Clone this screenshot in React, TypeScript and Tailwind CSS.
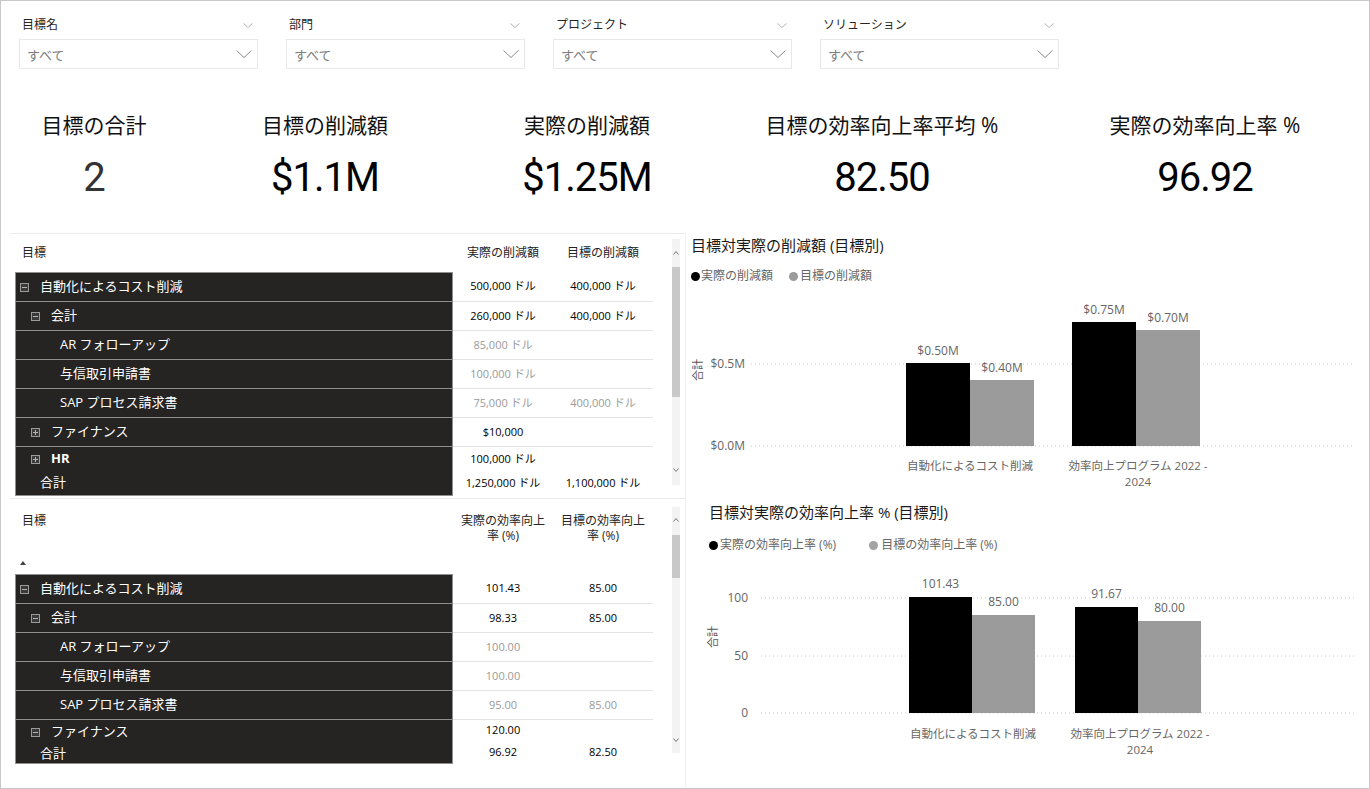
import React from "react";

type Row = {
  label: string;
  indent: string;
  icon?: "minus" | "plus";
  a?: string;
  t?: string;
  muted?: boolean;
  first?: boolean;
};

const savingsRows: Row[] = [
  { label: "自動化によるコスト削減", indent: "pl-[4px]", icon: "minus", a: "500,000 ドル", t: "400,000 ドル", first: true },
  { label: "会計", indent: "pl-[15px]", icon: "minus", a: "260,000 ドル", t: "400,000 ドル" },
  { label: "AR フォローアップ", indent: "pl-[44px]", a: "85,000 ドル", muted: true },
  { label: "与信取引申請書", indent: "pl-[44px]", a: "100,000 ドル", muted: true },
  { label: "SAP プロセス請求書", indent: "pl-[44px]", a: "75,000 ドル", t: "400,000 ドル", muted: true },
  { label: "ファイナンス", indent: "pl-[15px]", icon: "plus", a: "$10,000" },
];

const rateRows: Row[] = [
  { label: "自動化によるコスト削減", indent: "pl-[4px]", icon: "minus", a: "101.43", t: "85.00", first: true },
  { label: "会計", indent: "pl-[15px]", icon: "minus", a: "98.33", t: "85.00" },
  { label: "AR フォローアップ", indent: "pl-[44px]", a: "100.00", muted: true },
  { label: "与信取引申請書", indent: "pl-[44px]", a: "100.00", muted: true },
  { label: "SAP プロセス請求書", indent: "pl-[44px]", a: "95.00", t: "85.00", muted: true },
];

const kpis = [
  { title: "目標の合計", value: "2", w: "w-[170px]", color: "text-[#333333]" },
  { title: "目標の削減額", value: "$1.1M", w: "w-[292px]", color: "text-black" },
  { title: "実際の削減額", value: "$1.25M", w: "w-[232px]", color: "text-black" },
  { title: "目標の効率向上率平均 %", value: "82.50", w: "w-[358px]", color: "text-black" },
  { title: "実際の効率向上率 %", value: "96.92", w: "w-[288px]", color: "text-black" },
];

const Chevron = ({ w, h, color, up }: { w: number; h: number; color: string; up?: boolean }) => (
  <svg width={w} height={h} viewBox={`0 0 ${w} ${h}`} fill="none" className="shrink-0">
    {up ? (
      <polyline points={`0.5,${h - 0.5} ${w / 2},0.5 ${w - 0.5},${h - 0.5}`} stroke={color} strokeWidth="1" />
    ) : (
      <polyline points={`0.5,0.5 ${w / 2},${h - 0.5} ${w - 0.5},0.5`} stroke={color} strokeWidth="1" />
    )}
  </svg>
);

const Expander = ({ plus }: { plus?: boolean }) => (
  <svg width="9" height="9" viewBox="0 0 9 9" className="shrink-0">
    <rect x="0.5" y="0.5" width="8" height="8" fill="#3a3a3a" stroke="#9a9a9a" />
    <line x1="2" y1="4.5" x2="7" y2="4.5" stroke="#b5b5b5" />
    {plus && <line x1="4.5" y1="2" x2="4.5" y2="7" stroke="#b5b5b5" />}
  </svg>
);

const Slicer = ({ label }: { label: string }) => (
  <div className="w-[239px] flex flex-col">
    <div className="h-[16px] flex items-center justify-between pl-[3px] pr-[5px]">
      <span className="text-[12px] leading-[16px] text-[#252423]">{label}</span>
      <Chevron w={10} h={5} color="#b3b3b3" />
    </div>
    <div className="mt-[6px] h-[30px] border border-[#e8e8e8] flex items-center justify-between pl-[7px] pr-[5px]">
      <span className="text-[13px] text-[#7c7c7c] pt-[3px]">すべて</span>
      <Chevron w={16} h={8} color="#8a8a8a" />
    </div>
  </div>
);

const Scrollbar = ({ className, thumb, upGap, downGap }: { className: string; thumb: string; upGap: string; downGap: string }) => (
  <div className={`w-[8px] bg-[#f3f3f3] flex flex-col items-center ${className}`}>
    <div className={upGap}>
      <Chevron w={6} h={4} color="#777777" up />
    </div>
    <div className={`w-[8px] bg-[#c8c8c8] ${thumb}`} />
    <div className="flex-1" />
    <div className={downGap}>
      <Chevron w={6} h={4} color="#777777" />
    </div>
  </div>
);

const DataRow = ({ row }: { row: Row }) => {
  const valueColor = row.muted ? "text-[#9a9a9a]" : "text-black";
  return (
    <div className="flex">
      <div
        className={`w-[438px] h-[29px] bg-[#252423] border-x border-b border-[#8f8f8f] flex items-center gap-[11px] text-[13px] text-white ${row.indent} ${row.first ? "border-t h-[30px]" : ""}`}
      >
        {row.icon && <Expander plus={row.icon === "plus"} />}
        <span>{row.label}</span>
      </div>
      <div className={`w-[100px] border-b border-[#e3e3e3] flex items-center justify-center text-[11px] ${valueColor}`}>{row.a}</div>
      <div className={`w-[100px] border-b border-[#e3e3e3] flex items-center justify-center text-[11px] ${valueColor}`}>{row.t}</div>
    </div>
  );
};

type Bar = { x: number; top: number; fill: string; label: string };
type ChartProps = {
  ticks: { y: number; label: string }[];
  tickRight: number;
  gridFrom: number;
  gridTo: number;
  axis: { x: number; y: number };
  bars: Bar[];
  barW: number;
  baseline: number;
  labelGap: number;
  cats: { cx: number; lines: string[] }[];
  catY: number;
};

const BarChart = ({ ticks, tickRight, gridFrom, gridTo, axis, bars, barW, baseline, labelGap, cats, catY }: ChartProps) => (
  <svg width="683" height="205" viewBox="0 0 683 205" className="block">
    {ticks.map((t) => (
      <g key={t.label}>
        <line x1={gridFrom} y1={t.y} x2={gridTo} y2={t.y} stroke="#c8c8c8" strokeWidth="1" strokeDasharray="1 3" />
        <text x={tickRight} y={t.y + 4} textAnchor="end" fontSize="12" fill="#666666">
          {t.label}
        </text>
      </g>
    ))}
    <text x={axis.x} y={axis.y} transform={`rotate(-90 ${axis.x} ${axis.y})`} textAnchor="middle" dominantBaseline="middle" fontSize="11" fill="#555555">
      合計
    </text>
    {bars.map((b) => (
      <g key={b.label + b.x}>
        <rect x={b.x} y={b.top} width={barW} height={baseline - b.top} fill={b.fill} />
        <text x={b.x + barW / 2} y={b.top - labelGap} textAnchor="middle" fontSize="12" fill="#666666">
          {b.label}
        </text>
      </g>
    ))}
    {cats.map((c) =>
      c.lines.map((line, i) => (
        <text key={line} x={c.cx} y={catY + i * 16} textAnchor="middle" fontSize="11.5" fill="#666666">
          {line}
        </text>
      ))
    )}
  </svg>
);

export default function App() {
  return (
    <div className="w-[1370px] h-[789px] bg-white border border-[#c8c8c8] overflow-hidden flex flex-col text-black [font-family:Open_Sans,Noto_Sans_CJK_JP,sans-serif]">
      {/* slicers */}
      <div className="h-[72px] flex gap-[28px] pl-[18px] pt-[16px]">
        <Slicer label="目標名" />
        <Slicer label="部門" />
        <Slicer label="プロジェクト" />
        <Slicer label="ソリューション" />
      </div>

      {/* kpi cards */}
      <div className="h-[160px] flex pl-[8px] pt-[38px]">
        {kpis.map((k) => (
          <div key={k.title} className={`${k.w} flex flex-col items-center`}>
            <div className="text-[21px] leading-[28px] text-[#111111]">{k.title}</div>
            <div className={`mt-[15px] text-[40px] leading-[48px] tracking-[-1px] [font-family:Roboto,sans-serif] ${k.color}`}>{k.value}</div>
          </div>
        ))}
      </div>

      {/* bottom */}
      <div className="flex flex-1">
        <div className="w-[675px] ml-[9px] flex flex-col">
          {/* savings table */}
          <div className="h-[265px] border-t border-[#ebebeb] flex">
            <div className="w-[662px] pl-[5px] flex flex-col">
              <div className="h-[38px] flex items-center text-[12px] text-[#252423]">
                <div className="w-[438px] pl-[7px]">目標</div>
                <div className="w-[100px] text-center">実際の削減額</div>
                <div className="w-[100px] text-center">目標の削減額</div>
              </div>
              {savingsRows.map((r) => (
                <DataRow key={r.label} row={r} />
              ))}
              <div className="flex">
                <div className="w-[438px] bg-[#252423] border-x border-b border-[#8f8f8f] text-[13px] text-white flex flex-col">
                  <div className="h-[24px] flex items-center gap-[11px] pl-[15px]">
                    <Expander plus />
                    <span className="font-bold">HR</span>
                  </div>
                  <div className="h-[24px] flex items-center pl-[24px]">合計</div>
                </div>
                <div className="w-[100px] flex flex-col text-[11px]">
                  <div className="h-[24px] flex items-center justify-center">100,000 ドル</div>
                  <div className="h-[24px] flex items-center justify-center">1,250,000 ドル</div>
                </div>
                <div className="w-[100px] flex flex-col text-[11px]">
                  <div className="h-[24px]" />
                  <div className="h-[24px] flex items-center justify-center">1,100,000 ドル</div>
                </div>
              </div>
            </div>
            <Scrollbar className="mt-[5px] h-[246px]" thumb="mt-[12px] h-[130px]" upGap="mt-[12px] flex" downGap="mb-[13px] flex" />
          </div>

          {/* rate table */}
          <div className="h-[267px] border-t border-[#ebebeb] flex">
            <div className="w-[662px] pl-[5px] flex flex-col">
              <div className="h-[48px] flex items-start pt-[14px] text-[12px] text-[#252423]">
                <div className="w-[438px] pl-[7px] leading-[16px]">目標</div>
                <div className="w-[100px] text-center leading-[15px]">
                  実際の効率向上
                  <br />率 (%)
                </div>
                <div className="w-[100px] text-center leading-[15px]">
                  目標の効率向上
                  <br />率 (%)
                </div>
              </div>
              <div className="h-[27px] pt-[14px] pl-[5px]">
                <svg width="6" height="4" viewBox="0 0 6 4" className="block">
                  <polygon points="0,4 3,0 6,4" fill="#444444" />
                </svg>
              </div>
              {rateRows.map((r) => (
                <DataRow key={r.label} row={r} />
              ))}
              <div className="flex">
                <div className="w-[438px] bg-[#252423] border-x border-b border-[#8f8f8f] text-[13px] text-white flex flex-col">
                  <div className="h-[24px] flex items-center gap-[11px] pl-[15px]">
                    <Expander />
                    <span>ファイナンス</span>
                  </div>
                  <div className="h-[19px] flex items-center pl-[24px]">合計</div>
                </div>
                <div className="w-[100px] flex flex-col text-[11px]">
                  <div className="h-[21px] flex items-center justify-center">120.00</div>
                  <div className="h-[22px] flex items-center justify-center">96.92</div>
                </div>
                <div className="w-[100px] flex flex-col text-[11px]">
                  <div className="h-[21px]" />
                  <div className="h-[22px] flex items-center justify-center">82.50</div>
                </div>
              </div>
            </div>
            <Scrollbar className="mt-[8px] h-[246px]" thumb="mt-[13px] h-[43px]" upGap="mt-[11px] flex" downGap="mb-[11px] flex" />
          </div>
        </div>

        {/* charts */}
        <div className="w-[683px] border-l border-[#f0f0f0] flex flex-col">
          <div className="h-[262px] flex flex-col">
            <div className="pl-[5px] pt-[2px]">
              <div className="text-[15px] leading-[20px] text-[#1a1a1a]">目標対実際の削減額 (目標別)</div>
              <div className="mt-[13px] h-[16px] flex items-center text-[12px] text-[#666666]">
                <span className="w-[9px] h-[9px] rounded-full bg-black" />
                <span className="ml-[1px]">実際の削減額</span>
                <span className="ml-[16px] w-[9px] h-[9px] rounded-full bg-[#9b9b9b]" />
                <span className="ml-[2px]">目標の削減額</span>
              </div>
            </div>
            <div className="mt-[6px]">
              <BarChart
                ticks={[
                  { y: 74, label: "$0.5M" },
                  { y: 156, label: "$0.0M" },
                ]}
                tickRight={59}
                gridFrom={65}
                gridTo={669}
                axis={{ x: 13, y: 80 }}
                barW={64}
                baseline={156}
                labelGap={8}
                bars={[
                  { x: 220, top: 73, fill: "#000000", label: "$0.50M" },
                  { x: 284, top: 90, fill: "#9b9b9b", label: "$0.40M" },
                  { x: 386, top: 32, fill: "#000000", label: "$0.75M" },
                  { x: 450, top: 40, fill: "#9b9b9b", label: "$0.70M" },
                ]}
                cats={[
                  { cx: 284, lines: ["自動化によるコスト削減"] },
                  { cx: 452, lines: ["効率向上プログラム 2022 -", "2024"] },
                ]}
                catY={180}
              />
            </div>
          </div>
          <div className="h-[270px] flex flex-col">
            <div className="pl-[23px] pt-[7px]">
              <div className="text-[15px] leading-[20px] text-[#1a1a1a]">目標対実際の効率向上率 % (目標別)</div>
              <div className="mt-[15px] h-[16px] flex items-center text-[12px] text-[#666666]">
                <span className="w-[9px] h-[9px] rounded-full bg-black" />
                <span className="ml-[2px]">実際の効率向上率 (%)</span>
                <span className="ml-[33px] w-[9px] h-[9px] rounded-full bg-[#a3a3a3]" />
                <span className="ml-[3px]">目標の効率向上率 (%)</span>
              </div>
            </div>
            <div className="mt-[7px]">
              <BarChart
                ticks={[
                  { y: 38, label: "100" },
                  { y: 96, label: "50" },
                  { y: 153, label: "0" },
                ]}
                tickRight={62}
                gridFrom={75}
                gridTo={671}
                axis={{ x: 28, y: 77 }}
                barW={63}
                baseline={153}
                labelGap={9}
                bars={[
                  { x: 223, top: 37, fill: "#000000", label: "101.43" },
                  { x: 286, top: 55, fill: "#9b9b9b", label: "85.00" },
                  { x: 389, top: 47, fill: "#000000", label: "91.67" },
                  { x: 452, top: 61, fill: "#9b9b9b", label: "80.00" },
                ]}
                cats={[
                  { cx: 287, lines: ["自動化によるコスト削減"] },
                  { cx: 454, lines: ["効率向上プログラム 2022 -", "2024"] },
                ]}
                catY={178}
              />
            </div>
          </div>
        </div>
      </div>
    </div>
  );
}
